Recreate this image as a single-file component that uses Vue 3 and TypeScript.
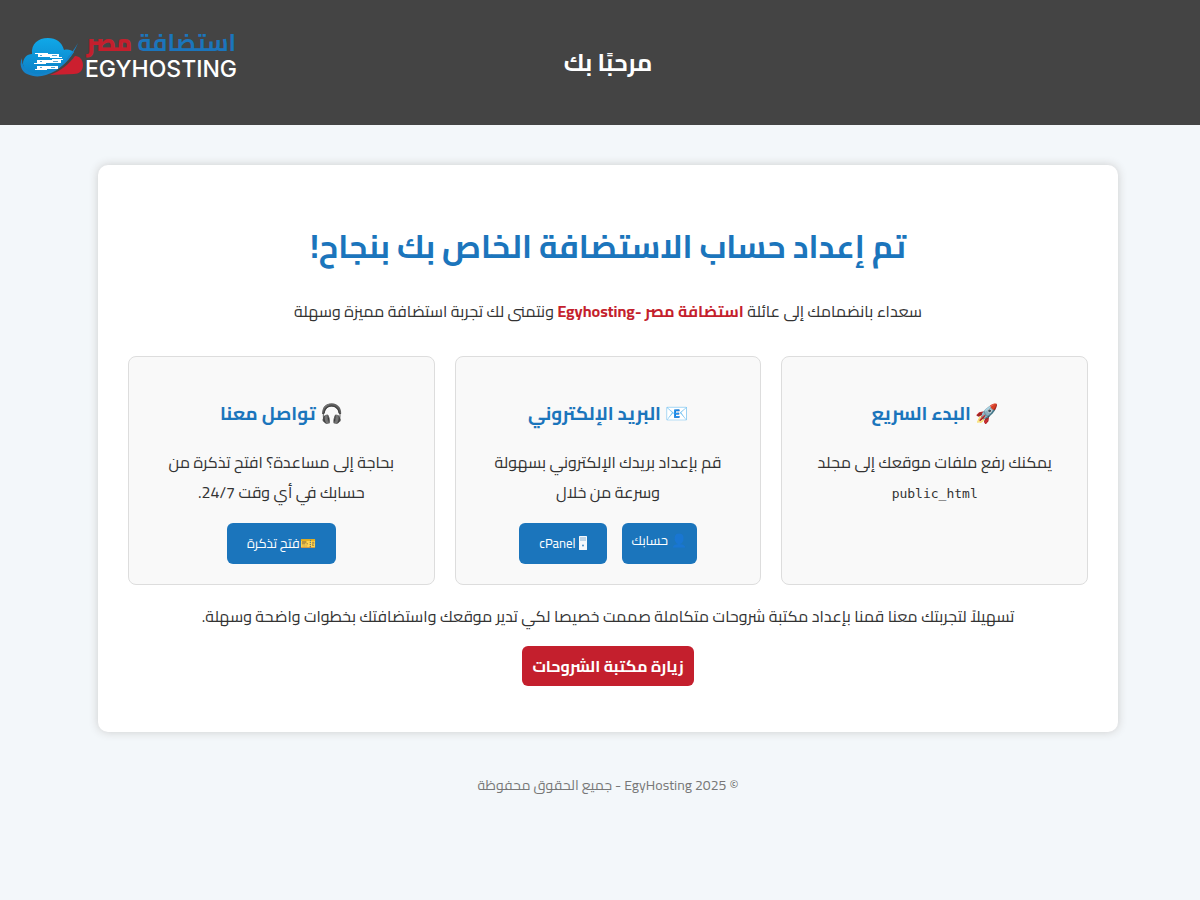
<script setup lang="ts">
interface Action {
  label: string
  compact?: boolean
  tower?: boolean
}
interface Card {
  title: string
  text: string
  code?: string
  actions: Action[]
}

const cards: Card[] = [
  { title: '🚀 البدء السريع', text: 'يمكنك رفع ملفات موقعك إلى مجلد', code: 'public_html', actions: [] },
  {
    title: '📧 البريد الإلكتروني',
    text: 'قم بإعداد بريدك الإلكتروني بسهولة وسرعة من خلال',
    actions: [{ label: '👤 حسابك', compact: true }, { label: 'cPanel', tower: true }],
  },
  {
    title: '🎧 تواصل معنا',
    text: 'بحاجة إلى مساعدة؟ افتح تذكرة من حسابك في أي وقت 24/7.',
    actions: [{ label: '🎫فتح تذكرة' }],
  },
]
</script>

<template>
  <div class="page" dir="rtl">
    <header class="top">
      <span></span>
      <h1 class="welcome">مرحبًا بك</h1>
      <a class="logo" href="#" dir="ltr">
        <svg class="cloud" viewBox="0 0 64 42" aria-hidden="true">
          <defs>
            <linearGradient id="sky" x1="0" y1="0" x2="0" y2="1">
              <stop offset="0" stop-color="#10a8e8" />
              <stop offset="1" stop-color="#0b80c6" />
            </linearGradient>
          </defs>
          <path d="M30 38C41 34 49 27 55 19C60 19 63 23 63 28C63 34 59 37 54 37Z" fill="#cc1f2f" />
          <path d="M12 17C11 7 18 1 28 1C36 1 42 5 44 13C48 12 51 13 54 15C47 26 37 34 26 37C15 40 4 36 3 27C3 21 7 17 12 17Z" fill="url(#sky)" />
          <path d="M2 21C-1 27 1 34 7 37C13 40 20 40 26 38C40 34 52 21 58 6C49 21 38 33 25 36C13 39 1 33 2 21Z" fill="#1583c9" />
          <g fill="#fff">
            <rect x="18" y="17" width="21" height="3" />
            <rect x="17" y="23" width="24" height="3" />
            <rect x="17" y="29" width="21" height="3" />
            <path d="M15 16H28V17H15ZM30 20H42V21H30ZM14 26H26V27H14ZM32 22H43V23H32ZM15 32H27V33H15Z" />
          </g>
          <path d="M20 18.500H22M32 18.500H37M20 24.500H22M33 24.500H38M20 30.500H22M31 30.500H35" stroke="#58a5d2" stroke-width="1" />
        </svg>
        <span class="brand">
          <span class="brand-ar" dir="rtl">استضافة <b>مصر</b></span>
          <span class="brand-en">EGYHOSTING</span>
        </span>
      </a>
    </header>

    <main class="panel">
      <h2 class="title">تم إعداد حساب الاستضافة الخاص بك بنجاح!</h2>
      <p>سعداء بانضمامك إلى عائلة <strong>استضافة مصر -Egyhosting</strong> ونتمنى لك تجربة استضافة مميزة وسهلة</p>
      <section class="cards">
        <article v-for="card in cards" :key="card.title" class="card">
          <h3>{{ card.title }}</h3>
          <p>{{ card.text }} <code v-if="card.code">{{ card.code }}</code></p>
          <div v-if="card.actions.length" class="actions">
            <a v-for="a in card.actions" :key="a.label" href="#" class="btn" :class="{ compact: a.compact }">
              <svg v-if="a.tower" class="tower" viewBox="0 0 8 14" aria-hidden="true">
                <rect width="8" height="14" rx="0.5" fill="#f4f8fc" />
                <path d="M1 2H7M1 4H7" stroke="#6d9fc9" stroke-width="0.8" />
                <circle cx="4" cy="9.500" r="0.9" fill="#3b84c0" />
              </svg>
              {{ a.label }}
            </a>
          </div>
        </article>
      </section>
      <p>تسهيلاً لتجربتك معنا قمنا بإعداد مكتبة شروحات متكاملة صممت خصيصا لكي تدير موقعك واستضافتك بخطوات واضحة وسهلة.</p>
      <a class="library" href="#">زيارة مكتبة الشروحات</a>
    </main>

    <footer class="foot">© 2025 EgyHosting - جميع الحقوق محفوظة</footer>
  </div>
</template>

<style>
body {
  margin: 0;
  background: #f3f7fa;
}
</style>

<style scoped>
.page {
  min-height: 100vh;
  font-family: "Cairo", "Open Sans", "DejaVu Sans", sans-serif;
  font-size: 16px;
  line-height: 30px;
  color: #333;
  text-align: center;
}
.top {
  display: grid;
  grid-template-columns: 1fr auto 1fr;
  align-items: center;
  min-height: 125px;
  padding: 0 4px 0 20px;
  box-sizing: border-box;
  background: #444;
  color: #fff;
}
.welcome {
  margin: 0;
  font-size: 24px;
}
.logo {
  display: flex;
  align-items: flex-end;
  justify-self: end;
  gap: 1px;
  margin-bottom: 20px;
  color: #fff;
  text-decoration: none;
}
.cloud {
  width: 64px;
  height: 42px;
}
.brand {
  display: flex;
  flex-direction: column;
}
.brand-ar {
  font-size: 24px;
  line-height: 32px;
  font-weight: 700;
  color: #1b75bc;
}
.brand-ar b {
  color: #c41f2d;
}
.brand-en {
  font-family: Inter, sans-serif;
  font-size: 23px;
  line-height: 20px;
  font-weight: 500;
}
.panel {
  max-width: 960px;
  margin: 40px auto 38px;
  padding: 30px 30px 46px;
  position: relative;
  left: 8px;
  border-radius: 10px;
  background: #fff;
  box-shadow: 0 0 10px #ccc;
}
p {
  margin: 0;
}
.title {
  margin: 21px 0 20px;
  font-size: 32px;
  line-height: 60px;
  color: #1b75bc;
}
strong {
  color: #c41f2d;
}
.cards {
  display: grid;
  grid-template-columns: repeat(3, 1fr);
  gap: 20px;
  margin: 30px 0 16px;
}
.card {
  padding: 20px;
  border: 1px solid #ddd;
  border-radius: 8px;
  background: #f9f9f9;
}
.card h3 {
  margin: 20px 0 16px;
  line-height: 34px;
  color: #1b75bc;
}
code {
  font-family: "DejaVu Sans Mono", monospace;
  font-size: 13px;
}
.actions {
  display: flex;
  justify-content: center;
  gap: 15px;
  margin-top: 16px;
}
.btn {
  padding: 8px 20px;
  border-radius: 6px;
  background: #1b75bc;
  color: #fff;
  font-size: 13px;
  line-height: 25px;
  text-decoration: none;
}
.btn.compact {
  padding: 5px 10px;
}
.tower {
  width: 8px;
  height: 14px;
  vertical-align: -2px;
}
.library {
  display: inline-block;
  margin-top: 15px;
  padding: 5px 10px;
  border-radius: 6px;
  background: #c41f2d;
  color: #fff;
  font-weight: 700;
  text-decoration: none;
}
.foot {
  padding-left: 16px;
  font-size: 14px;
  color: #777;
}
</style>
